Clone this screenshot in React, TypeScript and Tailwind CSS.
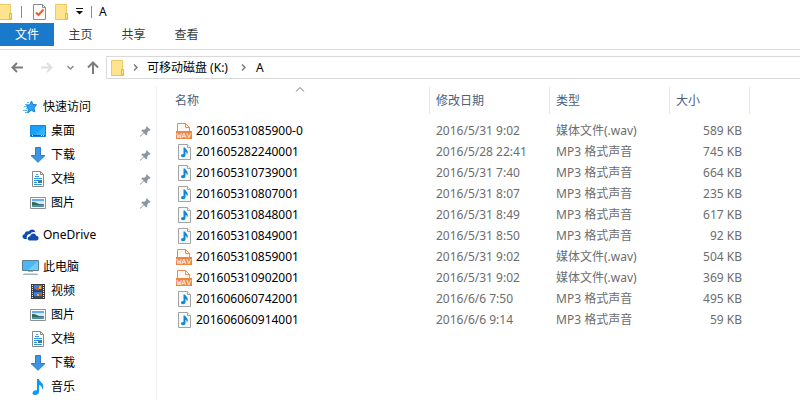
import type { ReactNode } from 'react'

/* ---------- icons ---------- */

const FolderIcon = ({ className = '' }: { className?: string }) => (
    <svg width="14" height="16" viewBox="0 0 14 16" className={`shrink-0 ${className}`} aria-hidden="true">
        <path d="M.5.5h11v9h1v6H.5z" fill="#ffe48f" stroke="#edc95f" />
        <path d="M10.500 9.500h2v5h-2z" fill="#ffe794" stroke="#e3b437" />
        <path d="M1 15.500h12" stroke="#e9c357" />
    </svg>
)

const PropertiesIcon = () => (
    <svg width="13" height="16" viewBox="0 0 13 16" className="shrink-0" aria-hidden="true">
        <path d="M.5.5h9l3 3v12H.5z" fill="#fafafa" stroke="#8c8c8c" />
        <path d="M9.500.5v3h3" fill="none" stroke="#8c8c8c" />
        <path d="M3 8.500 5.500 11l5-5.500" fill="none" stroke="#ee5f26" strokeWidth="2" />
    </svg>
)

const StarIcon = () => (
    <svg width="16" height="16" viewBox="0 0 16 16" className="shrink-0" aria-hidden="true">
        <path d="M9.500 2 11 5.500l3.500.2L12 9l.8 4-3.600-1.800L5.800 14l.5-4.500L4 7l3.500-.8z" fill="#2ea2ee" stroke="#1b83cf" />
        <path d="M5 3.500h2M3 5.500h4M2 7.500h3M4 9.500h2M1 11.500h4M3 13.500h2" stroke="#58b4ee" />
    </svg>
)

const DesktopIcon = () => (
    <svg width="16" height="12" viewBox="0 0 16 12" className="shrink-0" aria-hidden="true">
        <path d="M.5.5h15v11H.5z" fill="#1ba1f8" stroke="#1683d8" />
        <path d="M15 1v9H5z" fill="#35b2ff" />
        <path d="M1 10.500h14" stroke="#0d5ea5" />
        <path d="M2 10.500h1M11 10.500h1M13 10.500h1" stroke="#fff" />
    </svg>
)

const DownloadIcon = () => (
    <svg width="16" height="16" viewBox="0 0 16 16" className="shrink-0" aria-hidden="true">
        <path d="M5.500.5h5v8H15l-7 6.800-7-6.800h4.500z" fill="#3a96e4" stroke="#2c7bc6" />
    </svg>
)

const DocumentIcon = () => (
    <svg width="12" height="16" viewBox="0 0 12 16" className="shrink-0" aria-hidden="true">
        <path d="M.5.5h8l3 3v12H.5z" fill="#fff" stroke="#8a8a8a" />
        <path d="M8.500.5v3h3" fill="none" stroke="#8a8a8a" />
        <path d="M4 3.500h2M3 5.500h4M2 7.500h8M2 9.500h4M2 11.500h3M2 13.500h8" stroke="#2f9be0" />
        <path d="M6 9h4v3H6z" fill="#3f7f9e" />
    </svg>
)

const PictureIcon = () => (
    <svg width="16" height="12" viewBox="0 0 16 12" className="shrink-0" aria-hidden="true">
        <path d="M.5.5h15v11H.5z" fill="#fff" stroke="#8f8f8f" />
        <path d="M2 2h12v8H2z" fill="#cfe7f8" />
        <path d="M2 2h12v2H2z" fill="#69abe8" />
        <path d="M2 5c3-.5 5 1 7 2l5 .3V8H2z" fill="#2f6b58" />
        <path d="M2 8h12v2H2z" fill="#4c8fb4" />
    </svg>
)

const CloudIcon = () => (
    <svg width="17" height="12" viewBox="0 0 17 12" className="shrink-0" aria-hidden="true">
        <path d="M5 10H3C-.4 9.700-.2 5.600 2.500 5.300 2.700 2.500 5.300 1.700 6.700 2.500 8.600-.6 13-.1 13.500 3.500 10.500 2.300 9 3.700 8.300 5 5.500 4.700 4 7.500 5 10z" fill="#0f4cae" />
        <path d="M7.500 11.500c-2.600-.3-2.400-4.300.8-4.300.3-3.500 5.200-3.700 5.800-.5 3.300.2 3.300 4.600.2 4.800z" fill="#0f4cae" />
    </svg>
)

const ComputerIcon = () => (
    <svg width="17" height="16" viewBox="0 0 17 16" className="shrink-0" aria-hidden="true">
        <path d="M.5 1.500h16v10H.5z" fill="#4ab8f4" stroke="#5d7f98" />
        <path d="M16 2v9H6z" fill="#73cdfb" />
        <path d="M6 12.500h5M1 15.500h15" stroke="#9fb3c0" />
        <path d="M2 14.500h13" stroke="#cfdbe2" />
    </svg>
)

const VideoIcon = () => (
    <svg width="14" height="15" viewBox="0 0 14 15" className="shrink-0" aria-hidden="true">
        <path d="M0 0h14v15H0z" fill="#3d3d3d" />
        <path d="M1.500 1v14M12.500 1v14" stroke="#e8e8e8" strokeDasharray="1 1" />
        <path d="M3 1h8v6H3zM3 8h8v6H3z" fill="#3d7fe0" />
        <path d="M3 5h8v2H3zM3 12h8v2H3z" fill="#37506a" />
        <path d="M8 2h2v3H8zM6 10h2v2H6z" fill="#f0b323" />
        <path d="M5 4h3v2H5zM8 9h2v2H8z" fill="#d8532b" />
    </svg>
)

const MusicIcon = () => (
    <svg width="12" height="16" viewBox="0 0 12 16" className="shrink-0" aria-hidden="true">
        <path d="M5 0h2c.2 2.500 4.500 4 4.300 7.500-.1 1.500-.7 2.500-1.300 3.500.2-3-.8-4.500-3-5v7c0 2-1.800 3-3.700 3C1 16 .1 14.700.7 13.300c.6-1.500 2.600-2.300 4.300-1.800z" fill="#0d9bf0" />
    </svg>
)

const PinIcon = () => (
    <svg width="11" height="11" viewBox="0 0 11 11" className="shrink-0" aria-hidden="true">
        <path d="m6.500 0 4.300 4.200-1.300.6-.6-.2-1.700 2 .1 2-1 .9L4 7.200.6 10.600 0 10.700l.2-.8L3.600 6.700 1.300 4.400l1-.9 2 .2L6.400 2l-.3-.7z" fill="#8796a3" />
    </svg>
)

const WavIcon = () => (
    <svg width="16" height="16" viewBox="0 0 16 16" className="shrink-0" aria-hidden="true">
        <path d="M1.500 8V.5h8l4 4V8" fill="#fff8f3" stroke="#f0894b" />
        <path d="M9.500.5v4h4" fill="none" stroke="#f0894b" />
        <path d="M0 8h16v8H0z" fill="#f0853f" />
        <text x="8" y="15" textAnchor="middle" fill="#fff" fontSize="8" fontFamily="Liberation Mono, monospace">WAV</text>
    </svg>
)

const Mp3Icon = () => (
    <svg width="13" height="16" viewBox="0 0 13 16" className="mx-0.5 shrink-0" aria-hidden="true">
        <path d="M.5.5h9l3 3v12H.5z" fill="#f7f8f9" stroke="#a3a3a3" />
        <path d="M9.500.5v3h3" fill="#fff" stroke="#a3a3a3" />
        <path d="M5.500 3.500H7c.3 1.500 2.800 2.300 2.800 4.700 0 .9-.4 1.600-.9 2.300 0-1.500-.5-2.200-1.400-2.500V11c0 1.500-1.200 2.200-2.400 2.200-2.800 0-2.800-3.400.4-3.200z" fill="#1088d6" />
    </svg>
)

/* ---------- data ---------- */

type NavItem = { label: string; icon: ReactNode; pinned?: boolean }

const quickAccess: NavItem[] = [
    { label: '桌面', icon: <DesktopIcon />, pinned: true },
    { label: '下载', icon: <DownloadIcon />, pinned: true },
    { label: '文档', icon: <DocumentIcon />, pinned: true },
    { label: '图片', icon: <PictureIcon />, pinned: true },
]

const thisPc: NavItem[] = [
    { label: '视频', icon: <VideoIcon /> },
    { label: '图片', icon: <PictureIcon /> },
    { label: '文档', icon: <DocumentIcon /> },
    { label: '下载', icon: <DownloadIcon /> },
    { label: '音乐', icon: <MusicIcon /> },
]

const files = [
    { name: '20160531085900-0', date: '2016/5/31 9:02', kind: 'wav', size: '589 KB' },
    { name: '201605282240001', date: '2016/5/28 22:41', kind: 'mp3', size: '745 KB' },
    { name: '201605310739001', date: '2016/5/31 7:40', kind: 'mp3', size: '664 KB' },
    { name: '201605310807001', date: '2016/5/31 8:07', kind: 'mp3', size: '235 KB' },
    { name: '201605310848001', date: '2016/5/31 8:49', kind: 'mp3', size: '617 KB' },
    { name: '201605310849001', date: '2016/5/31 8:50', kind: 'mp3', size: '92 KB' },
    { name: '201605310859001', date: '2016/5/31 9:02', kind: 'wav', size: '504 KB' },
    { name: '201605310902001', date: '2016/5/31 9:02', kind: 'wav', size: '369 KB' },
    { name: '201606060742001', date: '2016/6/6 7:50', kind: 'mp3', size: '495 KB' },
    { name: '201606060914001', date: '2016/6/6 9:14', kind: 'mp3', size: '59 KB' },
]

/* ---------- parts ---------- */

const TitleBar = () => (
    <header className="flex h-[23px] items-center">
        <FolderIcon className="-ml-px" />
        <span className="ml-2 h-3 w-px bg-[#8a8a8a]" />
        <button className="ml-[11px]" aria-label="属性"><PropertiesIcon /></button>
        <button className="ml-[9px]" aria-label="新建文件夹"><FolderIcon /></button>
        <button className="ml-[7px]" aria-label="自定义快速访问工具栏">
            <svg width="7" height="7" viewBox="0 0 7 7" aria-hidden="true">
                <path d="M0 .5h7" stroke="#111" />
                <path d="M0 3h7L3.500 6.500z" fill="#111" />
            </svg>
        </button>
        <span className="ml-2 h-3 w-px bg-[#8a8a8a]" />
        <h1 className="ml-[7px]">A</h1>
    </header>
)

const RibbonTabs = () => (
    <nav className="flex h-[27px] items-start border-b border-[#dadbdc] text-[#3b3b3b]">
        <button className="h-[23px] w-[54px] bg-[#1979ca] text-white">文件</button>
        <button className="h-[23px] w-[53px]">主页</button>
        <button className="h-[23px] w-[53px]">共享</button>
        <button className="h-[23px] w-[53px]">查看</button>
    </nav>
)

const Chevron = () => (
    <svg width="5" height="7" viewBox="0 0 5 7" aria-hidden="true">
        <path d="m1 .5 3 3-3 3" fill="none" stroke="#7a7a7a" strokeWidth="1.500" />
    </svg>
)

const AddressBar = () => (
    <div className="flex h-[37px] items-center pb-0.5">
        <button className="ml-[11px]" aria-label="后退">
            <svg width="12" height="11" viewBox="0 0 12 11" fill="none" stroke="#7d7d7d" strokeWidth="2" aria-hidden="true">
                <path d="M12 5.500H1.500M6 1 1.500 5.500 6 10" />
            </svg>
        </button>
        <button className="ml-[18px]" aria-label="前进" disabled>
            <svg width="12" height="11" viewBox="0 0 12 11" fill="none" stroke="#dfdfdf" strokeWidth="2" aria-hidden="true">
                <path d="M0 5.500h10.500M6 1l4.500 4.500L6 10" />
            </svg>
        </button>
        <button className="ml-[14px]" aria-label="最近浏览的位置">
            <svg width="7" height="5" viewBox="0 0 7 5" fill="none" stroke="#8c8c8c" strokeWidth="1.500" aria-hidden="true">
                <path d="m.5 1 3 3 3-3" />
            </svg>
        </button>
        <button className="ml-[13px]" aria-label="上移">
            <svg width="12" height="13" viewBox="0 0 12 13" fill="none" stroke="#7d7d7d" strokeWidth="2" aria-hidden="true">
                <path d="M6 13V1.500M1 6.500l5-5 5 5" />
            </svg>
        </button>
        <div className="ml-[7px] flex h-[23px] flex-1 items-center border border-r-0 border-[#d9d9d9] pl-1">
            <FolderIcon />
            <span className="ml-2 flex"><Chevron /></span>
            <button className="ml-[9px]">可移动磁盘 (K:)</button>
            <span className="ml-[13px] flex"><Chevron /></span>
            <button className="ml-[10px]">A</button>
        </div>
    </div>
)

const NavRow = ({ item, child = false }: { item: NavItem; child?: boolean }) => (
    <li>
        <a href="#" className={`flex h-6 items-center pr-[5px] ${child ? 'pl-[30px]' : 'pl-[22px]'}`}>
            <span className="flex w-4 shrink-0 justify-center">{item.icon}</span>
            <span className="ml-[5px] flex-1">{item.label}</span>
            {item.pinned && <PinIcon />}
        </a>
    </li>
)

const Sidebar = () => (
    <aside className="flex w-[157px] shrink-0 flex-col gap-2 border-r border-[#f0f0f0] pt-2">
        <ul>
            <NavRow item={{ label: '快速访问', icon: <StarIcon /> }} />
            {quickAccess.map((item) => <NavRow key={item.label} item={item} child />)}
        </ul>
        <ul>
            <NavRow item={{ label: 'OneDrive', icon: <CloudIcon /> }} />
        </ul>
        <ul>
            <NavRow item={{ label: '此电脑', icon: <ComputerIcon /> }} />
            {thisPc.map((item) => <NavRow key={item.label} item={item} child />)}
        </ul>
    </aside>
)

const FileTable = () => (
    <main className="min-w-0 flex-1 pl-3">
        <table className="w-full table-fixed border-collapse text-[#6d6d6d]">
            <colgroup>
                <col className="w-[261px]" />
                <col className="w-[120px]" />
                <col className="w-[120px]" />
                <col className="w-20" />
                <col />
            </colgroup>
            <thead>
                <tr className="h-[27px] text-left text-[#4c607a] [&>th]:p-0 [&>th]:font-normal">
                    <th className="relative" aria-sort="ascending">
                        <div className="h-[27px] border-r border-[#e5e5e5] pl-1.5 leading-[27px]">名称</div>
                        <svg width="9" height="5" viewBox="0 0 9 5" className="absolute left-1/2 top-0 -translate-x-1/2" aria-hidden="true">
                            <path d="m.5 4.500 4-4 4 4" fill="none" stroke="#6d6d6d" />
                        </svg>
                    </th>
                    <th><div className="h-[27px] border-r border-[#e5e5e5] pl-1.5 leading-[27px]">修改日期</div></th>
                    <th><div className="h-[27px] border-r border-[#e5e5e5] pl-1.5 leading-[27px]">类型</div></th>
                    <th><div className="h-[27px] border-r border-[#e5e5e5] pl-1.5 leading-[27px]">大小</div></th>
                    <th />
                </tr>
            </thead>
            <tbody className="before:block before:h-1.5">
                {files.map((file) => (
                    <tr key={file.name} className="h-[21px] whitespace-nowrap">
                        <td className="p-0 pl-[7px] text-black">
                            <div className="flex items-center">
                                <span className="flex w-5 shrink-0">{file.kind === 'wav' ? <WavIcon /> : <Mp3Icon />}</span>
                                <span>{file.name}</span>
                            </div>
                        </td>
                        <td className="p-0 pl-1.5">{file.date}</td>
                        <td className="p-0 pl-1.5">{file.kind === 'wav' ? '媒体文件(.wav)' : 'MP3 格式声音'}</td>
                        <td className="p-0 pr-2 text-right">{file.size}</td>
                        <td />
                    </tr>
                ))}
            </tbody>
        </table>
    </main>
)

export default function App() {
    return (
        <div className="flex min-h-screen flex-col bg-white font-['Noto_Sans','Noto_Sans_CJK_SC',sans-serif] text-[12px] leading-4 text-black">
            <TitleBar />
            <RibbonTabs />
            <AddressBar />
            <div className="flex flex-1">
                <Sidebar />
                <FileTable />
            </div>
        </div>
    )
}
